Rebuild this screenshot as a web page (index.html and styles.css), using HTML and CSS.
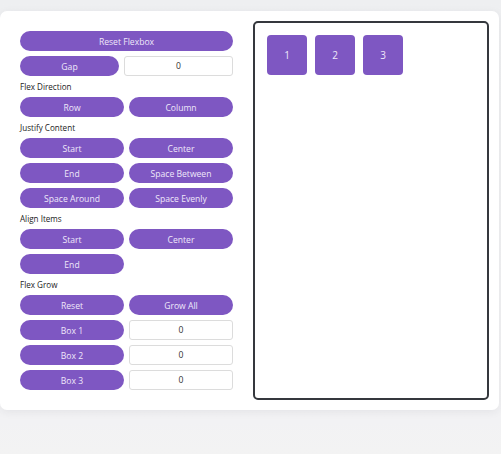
FILE: index.html
```html
<!DOCTYPE html>
<html>
<head>
<meta charset="utf-8">
<link rel="stylesheet" href="styles.css">
</head>
<body>
<div class="card">
  <div class="controls">
    <button class="btn full">Reset Flexbox</button>
    <div class="row split">
      <button class="btn">Gap</button>
      <input class="num" value="0">
    </div>
    <div class="label">Flex Direction</div>
    <div class="row">
      <button class="btn">Row</button>
      <button class="btn">Column</button>
    </div>
    <div class="label">Justify Content</div>
    <div class="row">
      <button class="btn">Start</button>
      <button class="btn">Center</button>
    </div>
    <div class="row">
      <button class="btn">End</button>
      <button class="btn">Space Between</button>
    </div>
    <div class="row">
      <button class="btn">Space Around</button>
      <button class="btn">Space Evenly</button>
    </div>
    <div class="label">Align Items</div>
    <div class="row">
      <button class="btn">Start</button>
      <button class="btn">Center</button>
    </div>
    <div class="row">
      <button class="btn">End</button>
    </div>
    <div class="label">Flex Grow</div>
    <div class="row">
      <button class="btn">Reset</button>
      <button class="btn">Grow All</button>
    </div>
    <div class="row">
      <button class="btn">Box 1</button>
      <input class="num" value="0">
    </div>
    <div class="row">
      <button class="btn">Box 2</button>
      <input class="num" value="0">
    </div>
    <div class="row">
      <button class="btn">Box 3</button>
      <input class="num" value="0">
    </div>
  </div>
  <div class="preview">
    <div class="box">1</div>
    <div class="box">2</div>
    <div class="box">3</div>
  </div>
</div>
</body>
</html>
```
FILE: styles.css
```css
html, body {
  margin: 0;
  padding: 0;
}
body {
  font-family: "Open Sans", "Noto Sans", sans-serif;
  padding-top: 11px;
  height: 443px;
  background: linear-gradient(#eeeff1 0, #f2f2f4 420px, #f3f3f3 454px);
}
.card {
  width: 479px;
  background: #fff;
  border-radius: 7px;
  padding: 10px;
  display: grid;
  grid-template-columns: 233px 1fr;
  gap: 10px;
  box-shadow: 0 2px 8px rgba(40, 40, 60, 0.07);
}
.controls {
  padding: 10px;
  display: flex;
  flex-direction: column;
  gap: 5px;
}
.row {
  display: grid;
  grid-template-columns: 1fr 1fr;
  gap: 5px;
}
.row.split {
  grid-template-columns: 99px 1fr;
}
.btn {
  box-sizing: border-box;
  height: 20px;
  border: none;
  border-radius: 10px;
  background: #7e57c2;
  color: #efe8fa;
  font-family: inherit;
  font-size: 8.6px;
  padding: 1px 0 0;
  margin: 0;
}
.num {
  box-sizing: border-box;
  height: 20px;
  width: 100%;
  border: 1px solid #dcdcdc;
  border-radius: 3px;
  background: #fff;
  text-align: center;
  font-family: inherit;
  font-size: 8.6px;
  color: #333;
  padding: 0;
  margin: 0;
}
.label {
  font-size: 8.1px;
  line-height: 11px;
  color: #222;
}
.preview {
  border: 2px solid #35383d;
  border-radius: 5px;
  padding: 12px;
  display: flex;
  flex-direction: row;
  align-items: flex-start;
  gap: 8px;
}
.box {
  width: 40px;
  height: 40px;
  border-radius: 4px;
  background: #7e57c2;
  color: #efe8fa;
  font-size: 10px;
  display: flex;
  align-items: center;
  justify-content: center;
}
```
